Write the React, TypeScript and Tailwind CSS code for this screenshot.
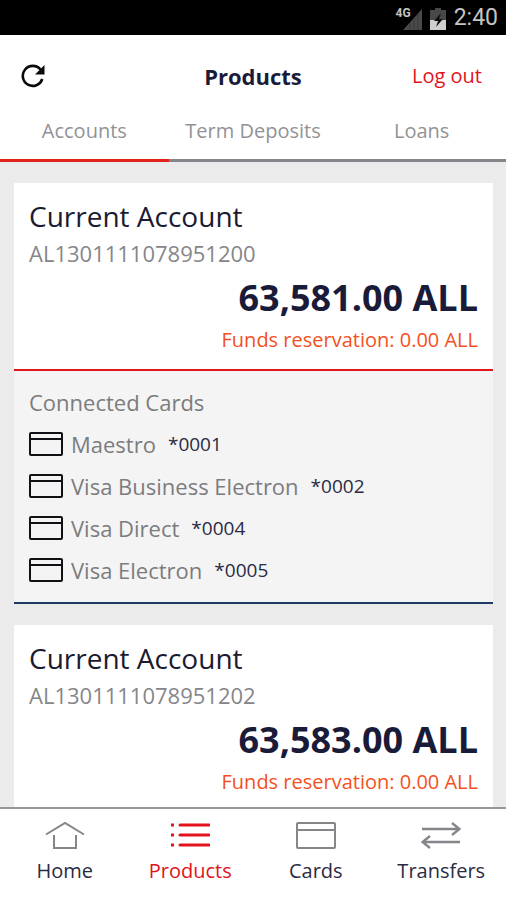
import { useState } from 'react'
import type { ReactNode } from 'react'
import clsx from 'clsx'

interface ConnectedCard {
  name: string
  ending: string
}

interface Account {
  title: string
  iban: string
  balance: string
  reserved: string
  cards: ConnectedCard[]
}

const tabs = ['Accounts', 'Term Deposits', 'Loans']

const accounts: Account[] = [
  {
    title: 'Current Account',
    iban: 'AL1301111078951200',
    balance: '63,581.00 ALL',
    reserved: '0.00 ALL',
    cards: [
      { name: 'Maestro', ending: '*0001' },
      { name: 'Visa Business Electron', ending: '*0002' },
      { name: 'Visa Direct', ending: '*0004' },
      { name: 'Visa Electron', ending: '*0005' },
    ],
  },
  {
    title: 'Current Account',
    iban: 'AL1301111078951202',
    balance: '63,583.00 ALL',
    reserved: '0.00 ALL',
    cards: [],
  },
]

function SignalIcon() {
  return (
    <svg width="20" height="22" viewBox="0 0 20 22" aria-hidden="true">
      <path d="M19 1v21H0z" fill="#4a4a4a" />
      <path d="M7 15v7M11 10v12M15 6v16" stroke="#383838" />
    </svg>
  )
}

function BatteryIcon() {
  return (
    <svg width="16" height="22" viewBox="0 0 16 22" aria-hidden="true">
      <path d="M5 0h6v2h5v11H0V2h5z" fill="#484848" />
      <path d="M0 12h16v10H0z" fill="#cfcfcf" />
      <path d="M11 5 4 13h4l-2 6 7-8H9z" fill="#0c0c0c" />
    </svg>
  )
}

function RefreshIcon() {
  return (
    <svg width="24" height="24" viewBox="0 0 24 24" aria-hidden="true">
      <path d="M21.3 15A10 10 0 1 1 19.5 5.5" fill="none" stroke="#0a0a0a" strokeWidth="2.6" />
      <path d="M23.5 1v9.500H14z" fill="#0a0a0a" />
    </svg>
  )
}

function CardIcon() {
  return (
    <svg width="34" height="24" viewBox="0 0 34 24" fill="none" stroke="#111115" strokeWidth="2" aria-hidden="true">
      <rect x="1" y="1" width="32" height="22" rx="1" />
      <path d="M1 7h32" />
    </svg>
  )
}

const navItems: { label: string; icon: ReactNode }[] = [
  {
    label: 'Home',
    icon: (
      <>
        <path d="M1 13.5 20 2l19 11.5" />
        <path d="M9 14v13h22V14" />
      </>
    ),
  },
  {
    label: 'Products',
    icon: (
      <>
        <path d="M1 4h3M1 14h3M1 24h3" strokeWidth="3" />
        <path d="M10 4h29M10 14h29M10 24h29" strokeWidth="3" strokeLinecap="round" />
      </>
    ),
  },
  {
    label: 'Cards',
    icon: (
      <>
        <rect x="1" y="2" width="38" height="25" rx="1" />
        <path d="M1 9h38" />
      </>
    ),
  },
  {
    label: 'Transfers',
    icon: (
      <>
        <path d="M1 8h37M31 2l7.500 6-7.500 6" strokeWidth="2.4" />
        <path d="M39 21H2M9 15l-7.500 6 7.500 6" strokeWidth="2.4" />
      </>
    ),
  },
]

function AccountPanel({ account }: { account: Account }) {
  return (
    <section>
      <div className="border-b-2 border-[#e2131b] bg-white px-[15px] pt-[13px] pb-[15px]">
        <h2 className="text-[28px] leading-10 text-[#1a1b30]">{account.title}</h2>
        <p className="text-[22px] leading-[34px] text-[#86868a]">{account.iban}</p>
        <p className="text-right text-[36px] leading-[56px] font-bold text-[#1a1b38]">{account.balance}</p>
        <p className="text-right text-[20px] leading-7 text-[#f4511e]">Funds reservation: {account.reserved}</p>
      </div>
      {account.cards.length > 0 && (
        <div className="border-b-2 border-[#1c3a63] bg-[#f4f4f5] px-[15px] pt-[10px] pb-[11px]">
          <h3 className="text-[22px] leading-[42px] text-[#7c7c7e]">Connected Cards</h3>
          <ul>
            {account.cards.map((card) => (
              <li key={card.ending} className="flex h-[42px] items-center">
                <CardIcon />
                <span className="ml-2 text-[22px] text-[#7c7c7e]">{card.name}</span>
                <span className="ml-3 text-[19px] text-[#2a2b42]">{card.ending}</span>
              </li>
            ))}
          </ul>
        </div>
      )}
    </section>
  )
}

export default function App() {
  const [activeTab, setActiveTab] = useState('Accounts')
  const [activeNav, setActiveNav] = useState('Products')

  return (
    <div className="flex h-dvh flex-col bg-[#ebebeb] font-['Open_Sans','Noto_Sans',sans-serif]">
      <div className="flex h-[35px] shrink-0 items-center justify-end bg-black pt-[2px] pr-2 text-[#c4c4c4]">
        <span className="mb-3 -mr-2 font-['Roboto',sans-serif] text-[12px] leading-3 font-bold">4G</span>
        <SignalIcon />
        <span className="ml-[7px]">
          <BatteryIcon />
        </span>
        <span className="ml-2 font-['Roboto',sans-serif] text-[23px]">2:40</span>
      </div>

      <header className="shrink-0 bg-white pt-[14px]">
        <div className="grid h-[54px] grid-cols-3 items-center px-[21px]">
          <button type="button" aria-label="Refresh" className="justify-self-start">
            <RefreshIcon />
          </button>
          <h1 className="text-center text-[22px] font-bold text-[#1a1b38]">Products</h1>
          <button type="button" className="justify-self-end pr-[3px] text-[20px] text-[#e2131b]">
            Log out
          </button>
        </div>
        <nav className="grid grid-cols-3">
          {tabs.map((tab) => (
            <button
              key={tab}
              type="button"
              onClick={() => setActiveTab(tab)}
              className={clsx(
                'h-[59px] border-b-3 text-[20px] whitespace-nowrap text-[#929296]',
                tab === activeTab ? 'border-[#e2231b]' : 'border-[#85858b]'
              )}
            >
              {tab}
            </button>
          ))}
        </nav>
      </header>

      <main className="flex min-h-0 flex-1 flex-col gap-[21px] overflow-y-auto pt-[21px] pr-[13px] pl-[14px] [scrollbar-width:none]">
        {accounts.map((account) => (
          <AccountPanel key={account.iban} account={account} />
        ))}
      </main>

      <nav className="grid h-[93px] shrink-0 grid-cols-4 border-t-2 border-[#97979b] bg-white px-[2px]">
        {navItems.map(({ label, icon }) => (
          <button
            key={label}
            type="button"
            onClick={() => setActiveNav(label)}
            className={clsx(
              'flex flex-col items-center pt-3',
              label === activeNav ? 'text-[#e2131b]' : 'text-[#85858a]'
            )}
          >
            <svg width="40" height="28" viewBox="0 0 40 28" fill="none" stroke="currentColor" strokeWidth="2" aria-hidden="true">
              {icon}
            </svg>
            <span className={clsx('mt-2 text-[20px] leading-7', label !== activeNav && 'text-[#2a2b42]')}>{label}</span>
          </button>
        ))}
      </nav>
    </div>
  )
}
